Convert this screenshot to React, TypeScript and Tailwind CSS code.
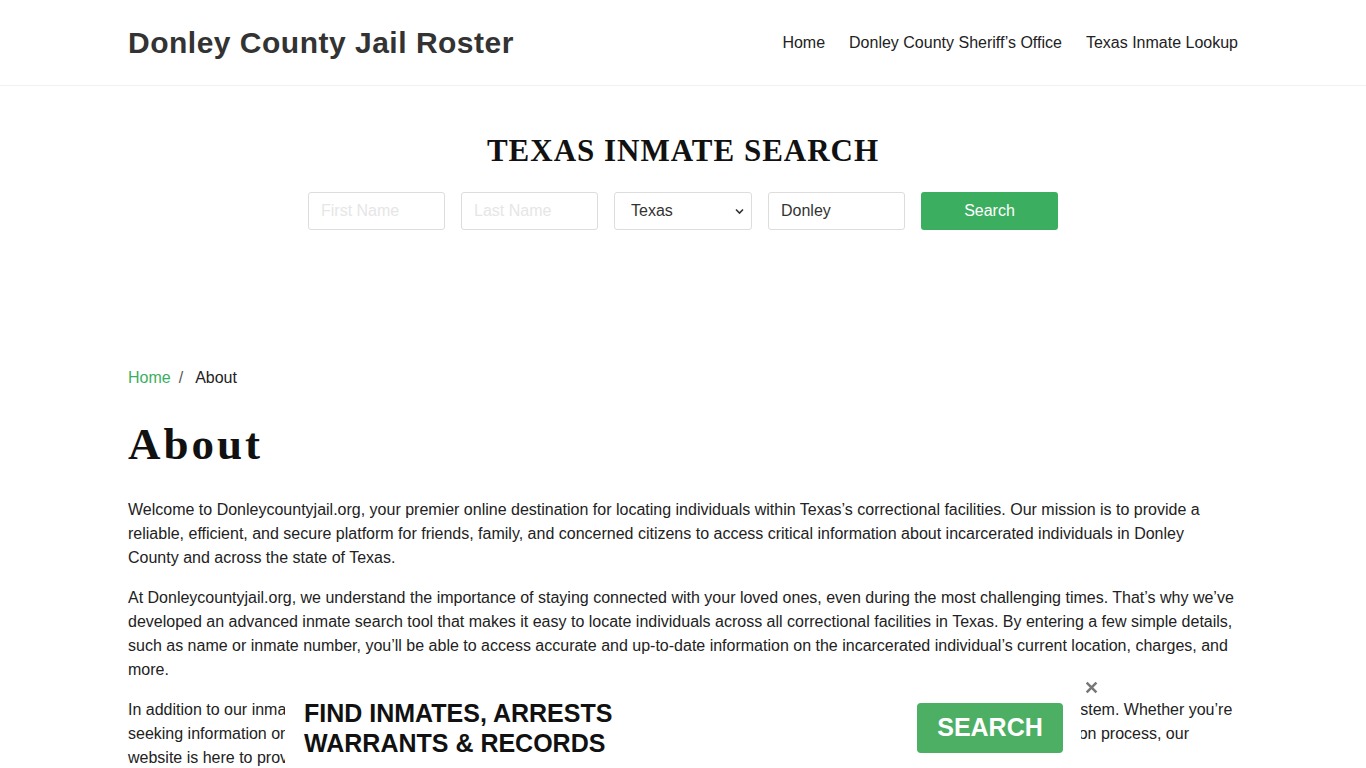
import React from "react";

export default function App() {
  const sans = { fontFamily: '"Liberation Sans", Arial, sans-serif' };
  return (
    <div className="min-h-screen bg-white text-[#212529]" style={sans}>
      <header className="border-b border-[#f0f0f0] h-[86px]">
        <div className="mx-auto max-w-[1140px] px-[15px] h-full flex items-center justify-between">
          <div className="text-[30px] font-bold text-[#333] tracking-[0.5px]">Donley County Jail Roster</div>
          <nav className="flex items-center gap-6 text-[16px] text-[#222]">
            <span>Home</span>
            <span>Donley County Sheriff’s Office</span>
            <span>Texas Inmate Lookup</span>
          </nav>
        </div>
      </header>

      <section className="flex flex-col items-center pt-[47px] h-[278px]">
        <h2
          className="text-[31px] font-bold text-[#111] tracking-[1px] leading-[36px]"
          style={{ fontFamily: '"Liberation Serif", "Times New Roman", serif' }}
        >
          TEXAS INMATE SEARCH
        </h2>
        <div className="flex gap-4 mt-[23px]">
          <input
            placeholder="First Name"
            className="w-[137px] h-[38px] border border-[#ddd] rounded-[3px] px-3 text-[16px] placeholder:text-[#e6e6e6] outline-none"
          />
          <input
            placeholder="Last Name"
            className="w-[137px] h-[38px] border border-[#ddd] rounded-[3px] px-3 text-[16px] placeholder:text-[#e6e6e6] outline-none"
          />
          <div className="relative w-[138px] h-[38px] border border-[#ddd] rounded-[3px] flex items-center px-4 text-[16px] text-[#333]">
            Texas
            <svg className="absolute right-[7px] top-[15px]" width="9" height="7" viewBox="0 0 9 7">
              <path d="M1 1.5 L4.5 5 L8 1.5" stroke="#333" strokeWidth="1.6" fill="none" />
            </svg>
          </div>
          <div className="w-[137px] h-[38px] border border-[#ddd] rounded-[3px] flex items-center px-3 text-[16px] text-[#333]">
            Donley
          </div>
          <button className="w-[137px] h-[38px] rounded-[3px] bg-[#3cae5f] text-white text-[16px]">Search</button>
        </div>
      </section>

      <main className="mx-auto max-w-[1140px] px-[15px]">
        <div className="flex items-center text-[16px] leading-[24px] pt-[2px]">
          <span className="text-[#3cae5f]">Home</span>
          <span className="pl-2 pr-3 text-[#555]">/</span>
          <span className="text-[#222]">About</span>
        </div>
        <h1
          className="text-[45px] font-bold text-[#111] tracking-[3px] mt-[27px] leading-[54px]"
          style={{ fontFamily: '"Liberation Serif", Georgia, serif' }}
        >
          About
        </h1>
        <div className="mt-[27px] text-[16px] leading-[24px] text-[#222] space-y-4">
          <p>
            Welcome to Donleycountyjail.org, your premier online destination for locating individuals within Texas’s
            correctional facilities. Our mission is to provide a reliable, efficient, and secure platform for friends,
            family, and concerned citizens to access critical information about incarcerated individuals in Donley
            County and across the state of Texas.
          </p>
          <p>
            At Donleycountyjail.org, we understand the importance of staying connected with your loved ones, even during
            the most challenging times. That’s why we’ve developed an advanced inmate search tool that makes it easy to
            locate individuals across all correctional facilities in Texas. By entering a few simple details, such as
            name or inmate number, you’ll be able to access accurate and up-to-date information on the incarcerated
            individual’s current location, charges, and more.
          </p>
          <p>
            In addition to our inmate search tool, we also provide a wealth of resources and information about the
            broader Texas criminal justice system. Whether you’re seeking information on visitation schedules, inmate
            communication options, commissary deposits, or help navigating the inmate visitation process, our website is
            here to provide the guidance and support you need.
          </p>
        </div>
      </main>

      <div className="fixed bottom-0 left-1/2 -translate-x-1/2 w-[796px] h-[80px] bg-white">
        <div className="flex items-center justify-between h-full pl-[19px] pr-[18px] pb-[2px]">
          <div className="text-[25px] font-bold leading-[30px] text-[#111] pt-[2px]">
            <div>FIND INMATES, ARRESTS</div>
            <div>WARRANTS &amp; RECORDS</div>
          </div>
          <button className="w-[146px] h-[50px] rounded-[4px] bg-[#4caf63] text-white text-[25px] font-bold mt-[2px]">
            SEARCH
          </button>
        </div>
      </div>
      <div className="fixed bottom-[73px] left-[1084px] text-[#777] text-[18px] leading-[14px] font-bold">✕</div>
    </div>
  );
}
